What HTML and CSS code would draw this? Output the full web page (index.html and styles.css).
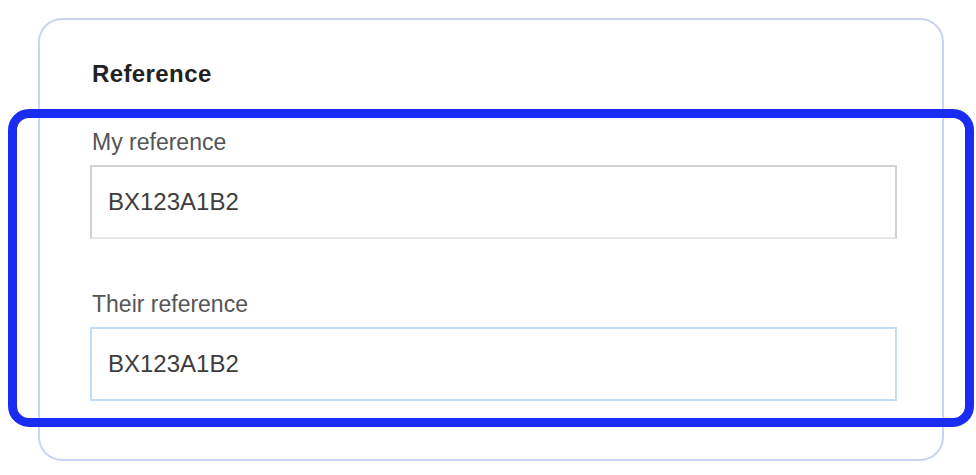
FILE: index.html
```html
<!DOCTYPE html>
<html lang="en">
<head>
    <meta charset="UTF-8">
    <meta name="viewport" content="width=device-width, initial-scale=1.0">
    <title>Reference</title>
    <link rel="stylesheet" href="styles.css">
</head>
<body>
    <div class="card">
        <h2 class="card-title">Reference</h2>

        <div class="field">
            <label class="field-label" for="my-ref">My reference</label>
            <input class="field-input" type="text" id="my-ref" value="BX123A1B2" readonly>
        </div>

        <div class="field">
            <label class="field-label" for="their-ref">Their reference</label>
            <input class="field-input focused" type="text" id="their-ref" value="BX123A1B2" readonly>
        </div>
    </div>

    <!-- highlight marker drawn over the two fields -->
    <div class="highlight"></div>
</body>
</html>
```

FILE: styles.css
```css
* {
    margin: 0;
    padding: 0;
    box-sizing: border-box;
}

body {
    position: relative;
    width: 976px;
    height: 475px;
    background-color: #fff;
    font-family: "Liberation Sans", Arial, Helvetica, sans-serif;
    overflow: hidden;
}

.card {
    margin: 18px 0 0 38px;
    width: 906px;
    height: 443px;
    border: 2px solid #cad4f2;
    border-radius: 24px;
    padding: 40px 45px 0 50px;
    background-color: #fff;
}

.card-title {
    padding-left: 2px;
    font-size: 24px;
    line-height: 28px;
    font-weight: bold;
    letter-spacing: 0.4px;
    color: #222;
    margin-bottom: 40px;
}

.field {
    display: flex;
    flex-direction: column;
}

.field + .field {
    margin-top: 51px;
}

.field-label {
    padding-left: 2px;
    font-size: 23px;
    line-height: 28px;
    color: #555;
    margin-bottom: 9px;
}

.field-input {
    width: 100%;
    height: 74px;
    padding: 0 16px;
    font-family: inherit;
    font-size: 24px;
    color: #3d3d3d;
    background-color: #fff;
    border: 2px solid #d2d2d2;
    border-bottom-color: #e7e7e7;
    outline: none;
}

.field-input.focused {
    border-color: #c3def4;
}

.highlight {
    position: absolute;
    left: 8px;
    top: 109px;
    width: 966px;
    height: 318px;
    border: 9px solid #1a2bf2;
    border-radius: 21px;
    pointer-events: none;
}
```
